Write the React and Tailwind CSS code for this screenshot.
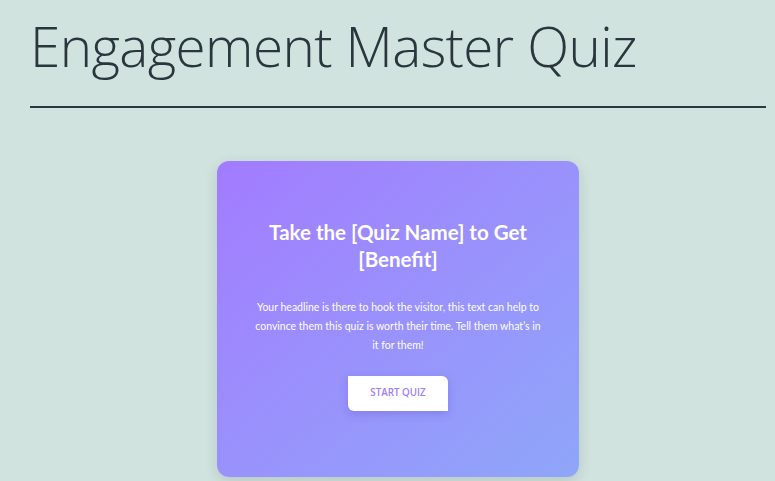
export default function App() {
  return (
    <div className="min-h-[481px] w-full bg-[#d0e3de] overflow-hidden">
      <div className="ml-[30px] w-[736px]">
        <h1
          className="pt-[10px] text-[54.8px] leading-[72px] text-[#2a363d] tracking-[-0.6px]"
          style={{ fontFamily: '"Open Sans", sans-serif', fontWeight: 300 }}
        >
          Engagement Master Quiz
        </h1>
        <div className="mt-[24px] h-[2px] bg-[#2c3a40]" />
        <div className="mt-[53px] flex justify-center">
          <div className="w-[362px] h-[316px] rounded-[12px] bg-gradient-to-br from-[#a27bff] to-[#8ea6f9] shadow-[0_4px_14px_rgba(0,0,0,0.12)] flex flex-col items-center pt-[58px] px-[20px]">
            <h2
              className="text-center text-white text-[20.5px] leading-[27px] font-bold"
              style={{ fontFamily: 'Lato, sans-serif' }}
            >
              Take the [Quiz Name] to Get
              <br />
              [Benefit]
            </h2>
            <p
              className="mt-[25px] text-center text-white text-[10.5px] leading-[19px] whitespace-nowrap"
              style={{ fontFamily: 'Lato, sans-serif' }}
            >
              Your headline is there to hook the visitor, this text can help to
              <br />
              convince them this quiz is worth their time. Tell them what’s in
              <br />
              it for them!
            </p>
            <button
              className="mt-[21px] w-[100px] h-[35px] bg-white text-[#a07cfe] text-[9.8px] font-semibold rounded-tr-[6px] rounded-bl-[6px] shadow-[0_3px_8px_rgba(80,60,180,0.25)]"
              style={{ fontFamily: '"Open Sans", sans-serif' }}
            >
              START QUIZ
            </button>
          </div>
        </div>
      </div>
    </div>
  );
}
